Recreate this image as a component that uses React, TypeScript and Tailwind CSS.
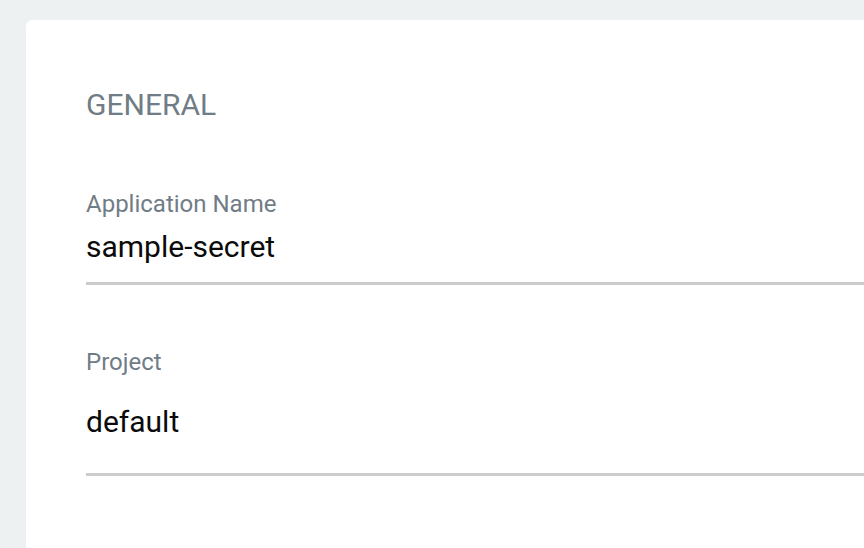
import React from "react";

export default function App() {
  return (
    <div
      className="w-[864px] h-[548px] overflow-hidden bg-[#eef1f2] pl-[26px] pt-[20px]"
      style={{ fontFamily: "Roboto, 'Liberation Sans', sans-serif" }}
    >
      <div className="h-[600px] w-[900px] bg-white rounded-tl-[6px] pl-[60px] pt-[67px]">
        <h2 className="text-[30px] leading-[36px] text-[#707d86] font-normal">GENERAL</h2>

        <div className="mt-[67px] flex flex-col">
          <label className="text-[24px] leading-[28px] text-[#717d86]">Application Name</label>
          <div className="mt-[11px] text-[30px] leading-[36px] text-[#0b0b0b]">sample-secret</div>
          <div className="mt-[17px] h-[3px] bg-[#cccccc]" />
        </div>

        <div className="mt-[63px] flex flex-col">
          <label className="text-[24px] leading-[28px] text-[#717d86]">Project</label>
          <div className="mt-[28px] text-[30px] leading-[36px] text-[#0b0b0b]">default</div>
          <div className="mt-[33px] h-[3px] bg-[#cccccc]" />
        </div>
      </div>
    </div>
  );
}
